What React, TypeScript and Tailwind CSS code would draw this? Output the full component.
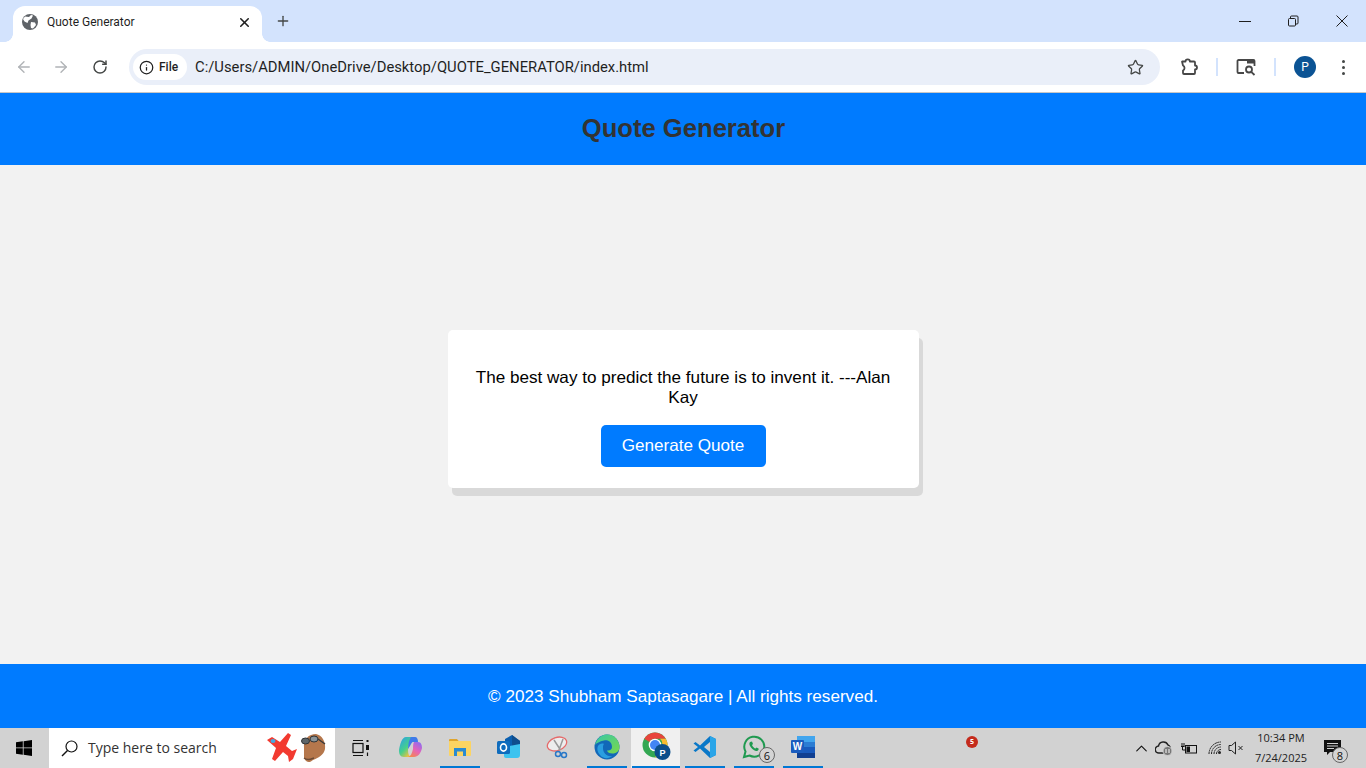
import { ArrowLeft, ArrowRight, ChevronUp, Info, Plus, RotateCw, Star, X } from "lucide-react";
import type { ReactNode } from "react";

function GlobeIcon() {
  return (
    <svg width="16" height="16" viewBox="0 0 16 16">
      <circle cx="8" cy="8" r="8" fill="#5f6368" />
      <path d="M3 2.5 L7 3 L9 1 L11 1.5 L9.5 4.5 L6.5 6.5 L5.5 9 L2.5 7.5 L1 5 Z" fill="#fff" />
      <path d="M9 8 L13 8.5 L14 11 L11 14.5 L9 14 L8.5 11 Z" fill="#fff" />
    </svg>
  );
}

function MinimizeIcon() {
  return (
    <svg width="12" height="12" viewBox="0 0 12 12" stroke="#1f1f1f" strokeWidth="1">
      <path d="M0 6.5H12" />
    </svg>
  );
}

function RestoreIcon() {
  return (
    <svg width="12" height="12" viewBox="0 0 12 12" fill="none" stroke="#1f1f1f" strokeWidth="1">
      <rect x="1.5" y="3.5" width="7" height="7.5" rx="1" />
      <path d="M3.5 3.5V2a1 1 0 0 1 1-1H10a1 1 0 0 1 1 1v6a1 1 0 0 1-1 1H8.5" />
    </svg>
  );
}

function CloseIcon() {
  return (
    <svg width="12" height="12" viewBox="0 0 12 12" stroke="#1f1f1f" strokeWidth="1">
      <path d="M.5.5 11.5 11.5M11.5.5.5 11.5" />
    </svg>
  );
}

function PuzzleIcon() {
  return (
    <svg width="20" height="20" viewBox="0 0 20 20" fill="none" stroke="#474747" strokeWidth="1.8" strokeLinejoin="round">
      <path d="M3 4.5H6.5a2.2 2.2 0 0 1 4.4 0H15a1 1 0 0 1 1 1V8.5a2 2 0 0 1 0 4V16a1 1 0 0 1-1 1H5a1 1 0 0 1-1-1v-2.5a2.8 2.8 0 0 0 0-5Z" />
    </svg>
  );
}

function LensIcon() {
  return (
    <svg width="20" height="20" viewBox="0 0 20 20" fill="none">
      <path d="M8 16H2.5a1 1 0 0 1-1-1V4a1 1 0 0 1 1-1h15a1 1 0 0 1 1 1v5" stroke="#474747" strokeWidth="1.8" />
      <rect x="11" y="3" width="8" height="3.5" fill="#474747" />
      <circle cx="13" cy="12.5" r="3" stroke="#474747" strokeWidth="1.8" />
      <path d="M15.2 14.8 18.5 18" stroke="#474747" strokeWidth="1.8" />
    </svg>
  );
}

function WindowsLogo() {
  return (
    <svg width="16" height="16" viewBox="0 0 16 16" fill="#000">
      <path d="M0 2.3 6.8 1.3V7.5H0ZM7.6 1.2 16 0V7.5H7.6ZM0 8.3H6.8V14.7L0 13.7ZM7.6 8.3H16V16L7.6 14.8Z" />
    </svg>
  );
}

function SearchGlass() {
  return (
    <svg width="17" height="17" viewBox="0 0 17 17" fill="none" stroke="#111" strokeWidth="1.2">
      <circle cx="10.5" cy="6.5" r="5.5" />
      <path d="M6.5 10.5 1 16" strokeWidth="1.5" />
    </svg>
  );
}

function SearchDoodle() {
  return (
    <svg width="62" height="32" viewBox="0 0 62 32" fill="none">
      <path d="M1 8 6 5 14 10 22 1 25 3 20 14 26 19 31 17 27 27 23 30 22 24 17 20 9 29 6 27 10 16Z" fill="#f23a30" />
      <ellipse cx="7" cy="9" rx="2.5" ry="2" fill="#45a8e0" />
      <path d="M38 16C37 7 43 2 50 2 56 3 60 10 59 17 58 23 52 26 47 28 44 31 40 31 38 26Z" fill="#b5774c" />
      <path d="M38 26C42 29 45 27 48 26" stroke="#6b4a35" strokeWidth="1.5" />
      <ellipse cx="39.5" cy="9" rx="4" ry="3" fill="#5d6569" stroke="#2e3336" />
      <ellipse cx="48" cy="7" rx="4" ry="3" fill="#8b9499" stroke="#2e3336" />
      <path d="M52 7 59 12" stroke="#3a3a3a" strokeWidth="1.5" />
    </svg>
  );
}

function TaskViewIcon() {
  return (
    <svg width="18" height="18" viewBox="0 0 18 18" fill="none" stroke="#111" strokeWidth="1.2">
      <path d="M1 1.5H11M1 16.5H11" />
      <rect x="1" y="4.5" width="10" height="9" />
      <rect x="14.5" y="1" width="2" height="2" fill="#111" stroke="none" />
      <rect x="14" y="6" width="3" height="5" fill="#111" stroke="none" />
      <path d="M15.5 13.5V17" />
    </svg>
  );
}

function CopilotIcon() {
  return (
    <svg width="25" height="22" viewBox="0 0 25 22">
      <defs>
        <linearGradient id="copA" x1="0" y1="0" x2="0.7" y2="1">
          <stop offset="0" stopColor="#2a9df0" />
          <stop offset="0.6" stopColor="#45d08c" />
          <stop offset="1" stopColor="#f2c23e" />
        </linearGradient>
        <linearGradient id="copB" x1="0.8" y1="0" x2="0.2" y2="1">
          <stop offset="0" stopColor="#8f6cf0" />
          <stop offset="0.5" stopColor="#e663b8" />
          <stop offset="1" stopColor="#f58a4a" />
        </linearGradient>
      </defs>
      <path d="M8 1H14C12 5 10 9 10 14 10 18 11 20 13 21H6C2 21 1 18 1 14 2 8 4 1 8 1Z" fill="url(#copA)" />
      <path d="M16 6H20C23 6 24 9 24 12 23 17 20 21 16 21H10C13 20 14 17 15 13 15 10 15 8 16 6Z" fill="url(#copB)" />
      <path d="M13 1H17C19 1 20 3 20 6H15C14 6 13 8 12 10L10 13C10 8 11 4 13 1Z" fill="#3f7bea" />
    </svg>
  );
}

function ExplorerIcon() {
  return (
    <svg width="22" height="18" viewBox="0 0 22 18">
      <path d="M0 2a1 1 0 0 1 1-1H8L10 3.5H0Z" fill="#e0a52c" />
      <rect x="0" y="3" width="22" height="15" rx="1" fill="#fcd462" />
      <path d="M5 10H17V18H14V13.5H8V18H5Z" fill="#2a8bd2" />
    </svg>
  );
}

function OutlookIcon() {
  return (
    <svg width="24" height="24" viewBox="0 0 24 24">
      <path d="M8 4 15 0 23 6V10L8 14Z" fill="#0a5fb0" />
      <path d="M15 0 23 6V10L15 12Z" fill="#0f4e8d" />
      <path d="M7 12 23 9V20a3 3 0 0 1-3 3H9a2 2 0 0 1-2-2Z" fill="#3cc3ef" />
      <rect x="0" y="6" width="13" height="13" rx="1.5" fill="#0f6cbd" />
      <ellipse cx="6.5" cy="12.5" rx="3" ry="3.6" fill="none" stroke="#fff" strokeWidth="1.6" />
    </svg>
  );
}

function SnipIcon() {
  return (
    <svg width="24" height="24" viewBox="0 0 24 24" fill="none">
      <ellipse cx="11" cy="9" rx="10" ry="6.5" fill="#ededed" stroke="#e56b6b" strokeWidth="1.3" transform="rotate(-20 11 9)" />
      <path d="M8 5 14.5 15M17 4 13 15" stroke="#9a9a9a" strokeWidth="1.5" />
      <circle cx="12" cy="19" r="2.5" stroke="#2878c8" strokeWidth="1.5" />
      <circle cx="18" cy="20" r="2.5" stroke="#2878c8" strokeWidth="1.5" />
    </svg>
  );
}

function EdgeIcon() {
  return (
    <svg width="26" height="26" viewBox="0 0 26 26">
      <defs>
        <linearGradient id="edgeA" x1="0" y1="0" x2="1" y2="1">
          <stop offset="0" stopColor="#36c8a8" />
          <stop offset="1" stopColor="#7ad84a" />
        </linearGradient>
      </defs>
      <circle cx="13" cy="13" r="12.5" fill="#1268b8" />
      <path d="M1 11C3 3 9 .5 13 .5 21 .5 25.5 7 25.5 13c0 4-3 6.5-7 6.5-3 0-5-1-5.5-3 3 .5 5-1 5-3.5C18 8 14 5.5 10 6.5 5.5 7.5 2.5 9 1 11Z" fill="url(#edgeA)" />
      <path d="M9 14c0 5 4 9 9 8-3 3-9 3-12-1-3-3-3-7-2-9 1-2 4-3 6-2-1 1-1 2-1 4Z" fill="#2a9ee0" />
    </svg>
  );
}

function ChromeIcon() {
  return (
    <svg width="30" height="30" viewBox="0 0 30 30" className="ml-[3px]">
      <circle cx="13" cy="13" r="12.5" fill="#34a853" />
      <path d="M2.2 6.7A12.5 12.5 0 0 1 23.8 6.7H13A6.3 6.3 0 0 0 7.5 10Z" fill="#e8453c" />
      <path d="M23.8 6.7A12.5 12.5 0 0 1 13 25.5L18.5 16A6.3 6.3 0 0 0 18 6.7Z" fill="#f9bb2d" />
      <circle cx="13" cy="13" r="6.3" fill="#fff" />
      <circle cx="13" cy="13" r="5" fill="#4285f4" />
      <circle cx="20.5" cy="20" r="8" fill="#0b4f8a" />
      <text x="20.5" y="23.5" textAnchor="middle" fontSize="9" fontWeight="700" fill="#fff" fontFamily="Liberation Sans, sans-serif">P</text>
    </svg>
  );
}

function VsCodeIcon() {
  return (
    <svg width="24" height="24" viewBox="0 0 24 24">
      <path d="M17 1 23 4V20L17 23 7 13.5 2.5 17 .5 15.5 5 12 .5 8.5 2.5 7 7 10.5Z" fill="#0a78c8" />
      <path d="M17 1 23 4V20L17 23Z" fill="#2aa5e8" />
      <path d="M17 7V17L11 12Z" fill="#d0d0d0" />
    </svg>
  );
}

function WhatsAppIcon() {
  return (
    <svg width="24" height="24" viewBox="0 0 24 24" fill="none">
      <path d="M2 22 3.5 16.5A10 10 0 1 1 7.5 20.5Z" stroke="#1f9a50" strokeWidth="2" />
      <path d="M8 7C7 8 7 10 9 12.5S13.5 16.5 15 16 17 14 16.5 13.5L14.5 12.5 13.5 13.5C12.5 13.5 10.5 11.5 10 10L11 9 10 6.5Z" fill="#1f9a50" />
    </svg>
  );
}

function WordIcon() {
  return (
    <svg width="24" height="22" viewBox="0 0 24 22">
      <rect x="6" y="0" width="18" height="6" fill="#41a5ee" />
      <rect x="6" y="6" width="18" height="5" fill="#2b7cd3" />
      <rect x="6" y="11" width="18" height="6" fill="#185abd" />
      <rect x="6" y="17" width="18" height="5" fill="#103f91" />
      <rect x="0" y="4" width="13" height="13" rx="1" fill="#1a5cbe" />
      <text x="6.5" y="14" textAnchor="middle" fontSize="10" fontWeight="700" fill="#fff" fontFamily="Liberation Sans, sans-serif">W</text>
    </svg>
  );
}

function CloudIcon() {
  return (
    <svg width="18" height="16" viewBox="0 0 18 16">
      <path d="M4 13A3.5 3.5 0 0 1 3.5 6 5 5 0 0 1 13 5 3.5 3.5 0 0 1 15 7V9H10V13Z" fill="#d2d2d2" stroke="#222" strokeWidth="1.4" />
      <circle cx="12.5" cy="11" r="4.5" fill="#777" stroke="#d2d2d2" />
      <path d="M11 9V13M14 9V13" stroke="#fff" strokeWidth="1" />
    </svg>
  );
}

function BatteryIcon() {
  return (
    <svg width="18" height="14" viewBox="0 0 18 14" fill="none" stroke="#111" strokeWidth="1">
      <rect x="5.5" y="4.5" width="11" height="7.5" />
      <rect x="6.5" y="5.5" width="3.5" height="5.5" fill="#111" stroke="none" />
      <path d="M1 5.5H4.5M2 2V5.5M4 2V5.5M2.5 5.5V9H5" />
    </svg>
  );
}

function WifiIcon() {
  return (
    <svg width="14" height="14" viewBox="0 0 14 14" fill="none" stroke="#222" strokeWidth="1">
      <path d="M1 13A12 12 0 0 1 13 1M3.5 13A9.5 9.5 0 0 1 13 3.5M6 13A7 7 0 0 1 13 6M8.5 13A4.5 4.5 0 0 1 13 8.5" strokeDasharray="2 .5" />
      <circle cx="11.5" cy="11.5" r="1.5" fill="#222" stroke="none" />
    </svg>
  );
}

function MuteIcon() {
  return (
    <svg width="16" height="14" viewBox="0 0 16 14" fill="none" stroke="#222" strokeWidth="1">
      <path d="M1 4.5H3.5L7.5 1V13L3.5 9.5H1Z" />
      <path d="M10.5 5 14.5 9M14.5 5 10.5 9" />
    </svg>
  );
}

function NotificationIcon() {
  return (
    <svg width="18" height="18" viewBox="0 0 18 18">
      <path d="M0 1H17V13H6L3 16V13H0Z" fill="#111" />
      <path d="M3 4.5H14M3 7H14M3 9.5H10" stroke="#d0d0d0" strokeWidth="1" />
    </svg>
  );
}

function CountBadge({ value, className }: { value: string; className: string }) {
  return (
    <span className={`absolute flex h-4 w-4 items-center justify-center rounded-full border border-[#666] bg-[#d4d4d4] text-[11px] leading-none text-[#111] ${className}`}>
      {value}
    </span>
  );
}

const taskbarApps: { id: string; icon: ReactNode; line: string; badge?: string; active?: boolean }[] = [
  { id: "copilot", icon: <CopilotIcon />, line: "" },
  { id: "explorer", icon: <ExplorerIcon />, line: "bg-[#0078d4] mx-[5px] w-10" },
  { id: "outlook", icon: <OutlookIcon />, line: "" },
  { id: "snip", icon: <SnipIcon />, line: "" },
  { id: "edge", icon: <EdgeIcon />, line: "bg-[#0078d4] mx-[5px] w-10" },
  { id: "chrome", icon: <ChromeIcon />, line: "bg-[#0078d4] ml-px w-12", active: true },
  { id: "vscode", icon: <VsCodeIcon />, line: "bg-[#0078d4] mx-[5px] w-10" },
  { id: "whatsapp", icon: <WhatsAppIcon />, line: "bg-[#0078d4] mx-[5px] w-10", badge: "6" },
  { id: "word", icon: <WordIcon />, line: "bg-[#0078d4] mx-[5px] w-10" },
];

export default function App() {
  return (
    <div className="flex h-[768px] w-[1366px] flex-col overflow-hidden bg-[#f2f2f2] font-['Liberation_Sans',Arial,sans-serif]">
      <div className="flex h-[42px] shrink-0 items-end bg-[#d3e3fd] pl-[13px] font-['Roboto',sans-serif]">
        <div className="relative flex h-9 w-[249px] items-center rounded-t-xl bg-white pb-1 pl-[9px] pr-2">
          <span className="absolute bottom-0 left-[-8px] h-2 w-2 bg-[radial-gradient(circle_at_0_0,transparent_7.5px,white_8px)]" />
          <span className="absolute bottom-0 right-[-8px] h-2 w-2 bg-[radial-gradient(circle_at_100%_0,transparent_7.5px,white_8px)]" />
          <GlobeIcon />
          <span className="ml-[9px] flex-1 text-xs text-[#1f1f1f]">Quote Generator</span>
          <X size={15} strokeWidth={2.5} className="mr-[2px] text-[#1f1f1f]" />
        </div>
        <div className="mb-[9px] ml-[13px] flex h-6 w-[16px] items-center justify-center">
          <Plus size={16} strokeWidth={2} className="text-[#444746]" />
        </div>
        <div className="flex-1" />
        <div className="flex h-[42px] items-center text-[#1f1f1f]">
          <div className="flex w-[48px] justify-center">
            <MinimizeIcon />
          </div>
          <div className="flex w-[48px] justify-center">
            <RestoreIcon />
          </div>
          <div className="ml-[1px] flex w-[48px] justify-center">
            <CloseIcon />
          </div>
        </div>
      </div>

      <div className="flex h-[51px] shrink-0 items-center border-b border-[#c7c7c7] bg-white">
        <div className="flex w-[129px] items-center pl-[15px]">
          <ArrowLeft size={18} strokeWidth={1.8} className="text-[#b0b3b6]" />
          <ArrowRight size={18} strokeWidth={1.8} className="ml-[19px] text-[#b0b3b6]" />
          <RotateCw size={16} strokeWidth={2.2} className="ml-[22px] text-[#444746]" />
        </div>
        <div className="flex h-9 w-[1031px] items-center rounded-full bg-[#eaeff9] pl-[4px] pr-4">
          <div className="flex h-[26px] w-[54px] items-center gap-[5px] rounded-full bg-white pl-[6px]">
            <Info size={15} strokeWidth={2} className="text-[#1f1f1f]" />
            <span className="font-['Roboto',sans-serif] text-xs font-medium text-[#1f1f1f]">File</span>
          </div>
          <span className="ml-2 flex-1 font-['Roboto',sans-serif] text-[14.8px] text-[#1f1f1f]">C:/Users/ADMIN/OneDrive/Desktop/QUOTE_GENERATOR/index.html</span>
          <Star size={17} strokeWidth={1.8} className="text-[#444746]" />
        </div>
        <div className="ml-[19px] flex items-center">
          <PuzzleIcon />
          <div className="ml-[17px] h-[18px] w-[2px] bg-[#d3e3fd]" />
          <div className="ml-[18px]">
            <LensIcon />
          </div>
          <div className="ml-[18px] h-[18px] w-[2px] bg-[#d3e3fd]" />
          <div className="ml-[18px] flex h-[22px] w-[22px] items-center justify-center rounded-full bg-[#0b5394] font-['Roboto',sans-serif] text-xs text-white">
            P
          </div>
          <div className="ml-[26px] flex flex-col gap-[3px]">
            <span className="h-[3px] w-[3px] rounded-full bg-[#444746]" />
            <span className="h-[3px] w-[3px] rounded-full bg-[#444746]" />
            <span className="h-[3px] w-[3px] rounded-full bg-[#444746]" />
          </div>
        </div>
      </div>

      <header className="flex h-[72px] shrink-0 items-center justify-center bg-[#007bff] pb-[2px] pl-[1px]">
        <h1 className="text-[25.6px] font-bold text-[#333]">Quote Generator</h1>
      </header>

      <main className="flex flex-1 items-center justify-center bg-[#f2f2f2] pb-3">
        <div className="w-[471px] rounded-[5px] bg-white px-5 pb-[21px] pt-[38px] text-center shadow-[4px_8px_0_rgba(0,0,0,0.1)]">
          <p className="text-[17.12px] leading-5 text-black">The best way to predict the future is to invent it. ---Alan Kay</p>
          <button className="mt-[17px] h-[42px] w-[165px] rounded-[5px] bg-[#007bff] text-[17.12px] text-white">Generate Quote</button>
        </div>
      </main>

      <footer className="flex h-16 shrink-0 items-center justify-center bg-[#007bff] pt-[2px]">
        <p className="text-[17.12px] text-white">© 2023 Shubham Saptasagare | All rights reserved.</p>
      </footer>

      <div className="flex h-10 shrink-0 items-stretch bg-[#d2d2d2] font-['Open_Sans',sans-serif]">
        <div className="flex w-[49px] items-center justify-center pr-[2px]">
          <WindowsLogo />
        </div>
        <div className="flex w-[286px] items-center bg-white pl-[12px] pr-[7px]">
          <SearchGlass />
          <span className="ml-[10px] flex-1 text-sm text-[#333]">Type here to search</span>
          <SearchDoodle />
        </div>
        <div className="flex w-[51px] items-center justify-center">
          <TaskViewIcon />
        </div>
        {taskbarApps.map((app) => (
          <div key={app.id} className={`relative flex w-[49px] flex-col ${app.active ? "bg-[#f0f0f0]" : ""}`}>
            <div className="relative flex flex-1 items-center justify-center">
              {app.icon}
              {app.badge && <CountBadge value={app.badge} className="bottom-[3px] right-[3px]" />}
            </div>
            <div className={`h-[2px] ${app.line}`} />
          </div>
        ))}
        <div className="relative w-[139px]">
          <span className="absolute left-[139px] top-[8px] flex h-3 w-3 items-center justify-center rounded-full bg-[#c42b1c] text-[7px] font-bold text-white">
            5
          </span>
        </div>
        <div className="ml-[166px] flex items-center">
          <ChevronUp size={19} strokeWidth={1.4} className="text-[#111]" />
          <div className="ml-[4px]">
            <CloudIcon />
          </div>
          <div className="ml-[7px]">
            <BatteryIcon />
          </div>
          <div className="ml-[10px]">
            <WifiIcon />
          </div>
          <div className="ml-[6px]">
            <MuteIcon />
          </div>
          <div className="ml-[2px] flex w-[70px] flex-col items-center text-[11px] leading-[20px] text-[#222]">
            <span>10:34 PM</span>
            <span>7/24/2025</span>
          </div>
          <div className="relative ml-[2px] flex h-10 w-[30px] items-center justify-center pr-[1px]">
            <NotificationIcon />
            <CountBadge value="8" className="bottom-[5px] right-0" />
          </div>
        </div>
      </div>
    </div>
  );
}
